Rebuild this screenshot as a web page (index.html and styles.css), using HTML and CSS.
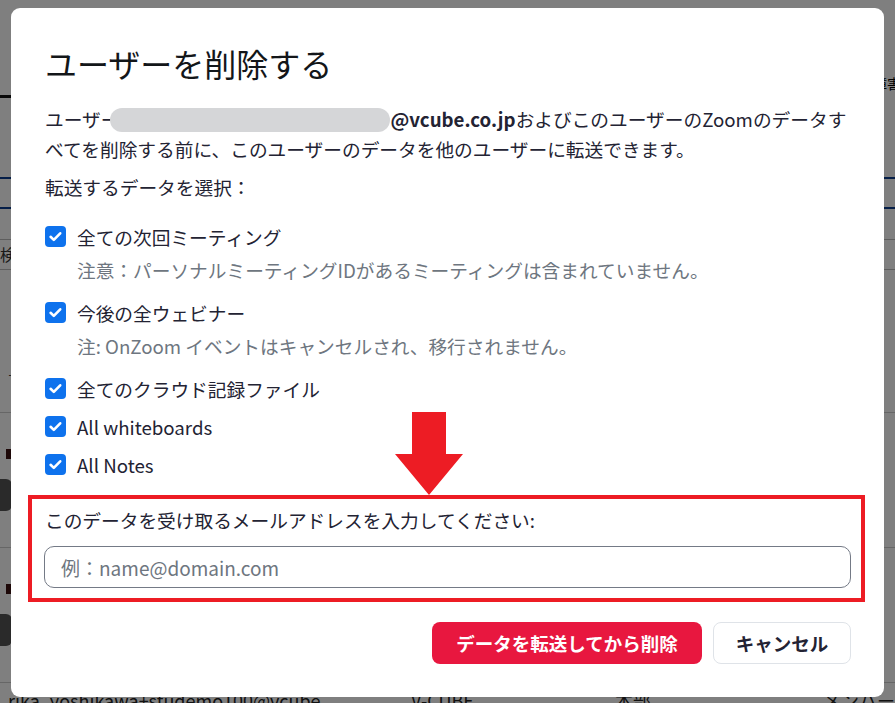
FILE: index.html
```html
<!DOCTYPE html>
<html lang="ja">
<head>
    <meta charset="UTF-8">
    <title>ユーザーを削除する</title>
    <link rel="stylesheet" href="styles.css">
</head>
<body>
    <!-- page behind the dialog -->
    <div class="page">
        <div class="page-head">
            <span class="head-tab"></span>
            <span class="head-right">障害</span>
        </div>
        <div class="page-tabs"></div>
        <div class="page-search">検索</div>
        <div class="page-filter">ー</div>
        <div class="page-row"><span class="flag"></span><span class="avatar"></span></div>
        <div class="page-row"><span class="flag"></span><span class="avatar"></span></div>
        <div class="page-row last">
            <span class="cell-mail">rika_yoshikawa+studemo100@vcube ...</span>
            <span class="cell-co">V-CUBE</span>
            <span class="cell-dept">本部</span>
            <span class="cell-role">メンバー</span>
        </div>
    </div>

    <div class="backdrop">
        <div class="modal">
            <h1 class="modal-title">ユーザーを削除する</h1>
            <p class="intro">ユーザー<span class="masked"></span><b>@vcube.co.jp</b>およびこのユーザーのZoomのデータすべてを削除する前に、このユーザーのデータを他のユーザーに転送できます。</p>
            <p class="pick">転送するデータを選択：</p>

            <div class="checks">
                <div class="check has-note">
                    <label><span class="box"><svg viewBox="0 0 21 21"><path d="M5.6 10.8l3.2 3.1 6.4-6.6"/></svg></span>全ての次回ミーティング</label>
                    <div class="note">注意：パーソナルミーティングIDがあるミーティングは含まれていません。</div>
                </div>
                <div class="check has-note">
                    <label><span class="box"><svg viewBox="0 0 21 21"><path d="M5.6 10.8l3.2 3.1 6.4-6.6"/></svg></span>今後の全ウェビナー</label>
                    <div class="note">注: OnZoom イベントはキャンセルされ、移行されません。</div>
                </div>
                <div class="check">
                    <label><span class="box"><svg viewBox="0 0 21 21"><path d="M5.6 10.8l3.2 3.1 6.4-6.6"/></svg></span>全てのクラウド記録ファイル</label>
                </div>
                <div class="check">
                    <label><span class="box"><svg viewBox="0 0 21 21"><path d="M5.6 10.8l3.2 3.1 6.4-6.6"/></svg></span>All whiteboards</label>
                </div>
                <div class="check">
                    <label><span class="box"><svg viewBox="0 0 21 21"><path d="M5.6 10.8l3.2 3.1 6.4-6.6"/></svg></span>All Notes</label>
                </div>
            </div>

            <div class="target">
                <svg class="arrow" viewBox="0 0 68 83"><path d="M17 0h34v42h17L34 83 0 42h17z"/></svg>
                <div class="target-label">このデータを受け取るメールアドレスを入力してください:</div>
                <input type="text" class="target-input" placeholder="例：name@domain.com">
            </div>

            <div class="actions">
                <button class="btn btn-danger">データを転送してから削除</button>
                <button class="btn btn-plain">キャンセル</button>
            </div>
        </div>
    </div>
</body>
</html>
```

FILE: styles.css
```css
* {
    box-sizing: border-box;
}
body {
    margin: 0;
    font-family: "Noto Sans CJK JP", "Noto Sans", sans-serif;
    color: #232333;
    background: #fff;
    overflow: hidden;
}

/* background page */
.page {
    height: 703px;
    overflow: hidden;
}
.page-head {
    height: 100px;
    position: relative;
    display: flex;
    justify-content: flex-end;
    align-items: flex-end;
}
.head-tab {
    position: absolute;
    left: 0;
    bottom: 2px;
    width: 120px;
    height: 3px;
    background: #111;
}
.head-right {
    font-size: 14px;
    color: #000;
    margin-right: -6px;
    margin-bottom: 7px;
}
.page-tabs {
    margin-top: 77px;
    border-top: 2px solid #0b3d91;
    border-bottom: 2px solid #0b3d91;
    height: 32px;
}
.page-search {
    margin-top: 30px;
    height: 31px;
    border-top: 1px solid #bbb;
    border-bottom: 1px solid #bbb;
    font-size: 16px;
    line-height: 29px;
    color: #333;
}
.page-filter {
    height: 143px;
    font-size: 10px;
    color: #333;
    padding: 98px 0 0 8px;
    border-bottom: 1px solid #ccc;
}
.page-row {
    height: 135px;
    border-bottom: 1px solid #ccc;
    padding-top: 36px;
}
.flag {
    display: block;
    width: 11px;
    height: 10px;
    margin-left: 6px;
    background: #3a1010;
}
.avatar {
    display: block;
    width: 32px;
    height: 32px;
    border-radius: 6px;
    background: #555;
    margin-left: -20px;
    margin-top: 20px;
}
.page-row.last {
    border: none;
    display: flex;
    padding: 4px 0 0 8px;
    font-size: 18px;
    color: #222;
}
.cell-mail { width: 403px; }
.cell-co { width: 204px; }
.cell-dept { width: 208px; }

.backdrop {
    position: fixed;
    inset: 0;
    background: rgba(0, 0, 0, 0.5);
}

/* dialog */
.modal {
    position: absolute;
    left: 11px;
    top: 8px;
    width: 873px;
    height: 689px;
    background: #fff;
    border-radius: 9px;
    padding: 35px 33px 0 34px;
}
.modal-title {
    margin: 0;
    font-size: 32px;
    font-weight: 400;
    line-height: 40px;
    color: #131619;
}
.intro {
    margin: 21px 0 0;
    font-size: 18.7px;
    line-height: 30px;
}
.masked {
    display: inline-block;
    width: 280px;
    height: 24px;
    margin-left: -9px;
    border-radius: 12px;
    background: #d5d6d8;
    vertical-align: -5px;
}
.intro b {
    font-weight: 700;
}
.pick {
    margin: 8px 0 0;
    font-size: 18.7px;
    line-height: 30px;
}
.checks {
    margin-top: 18px;
}
.check {
    font-size: 18.7px;
    line-height: 33px;
    margin-top: 5px;
}
.check.has-note + .check {
    margin-top: 10px;
}
.check:first-child {
    margin-top: 0;
}
.check label {
    display: flex;
    align-items: center;
    gap: 11px;
}
.box {
    width: 21px;
    height: 21px;
    border-radius: 4px;
    background: #0e72ed;
    flex: none;
}
.box svg {
    display: block;
    width: 21px;
    height: 21px;
    fill: none;
    stroke: #fff;
    stroke-width: 2.6;
    stroke-linecap: round;
    stroke-linejoin: round;
}
.note {
    padding-left: 32px;
    color: #6e7680;
}

/* annotated email field */
.target {
    position: relative;
    margin: 14px -14px 0 -17px;
    border: 4px solid #ed1c24;
    padding: 6px 10px 10px 12px;
}
.arrow {
    position: absolute;
    left: 363px;
    top: -87px;
    width: 68px;
    height: 83px;
    fill: #ed1c24;
}
.target-label {
    font-size: 18.7px;
    line-height: 30px;
    padding-left: 1px;
}
.target-input {
    display: block;
    width: 100%;
    height: 42px;
    margin-top: 11px;
    border: 1px solid #747a86;
    border-radius: 10px;
    padding: 0 16px;
    font-family: inherit;
    font-size: 19px;
    color: #232333;
    outline: none;
}
.target-input::placeholder {
    color: #6e7680;
}

.actions {
    display: flex;
    justify-content: flex-end;
    gap: 11px;
    margin-top: 20px;
}
.btn {
    height: 42px;
    border-radius: 8px;
    font-family: inherit;
    font-size: 18.5px;
    font-weight: 700;
    cursor: pointer;
}
.btn-danger {
    width: 270px;
    background: #e8173f;
    color: #fff;
    border: none;
}
.btn-plain {
    width: 138px;
    background: #fff;
    color: #232333;
    border: 1px solid #dfe3e8;
}
```
